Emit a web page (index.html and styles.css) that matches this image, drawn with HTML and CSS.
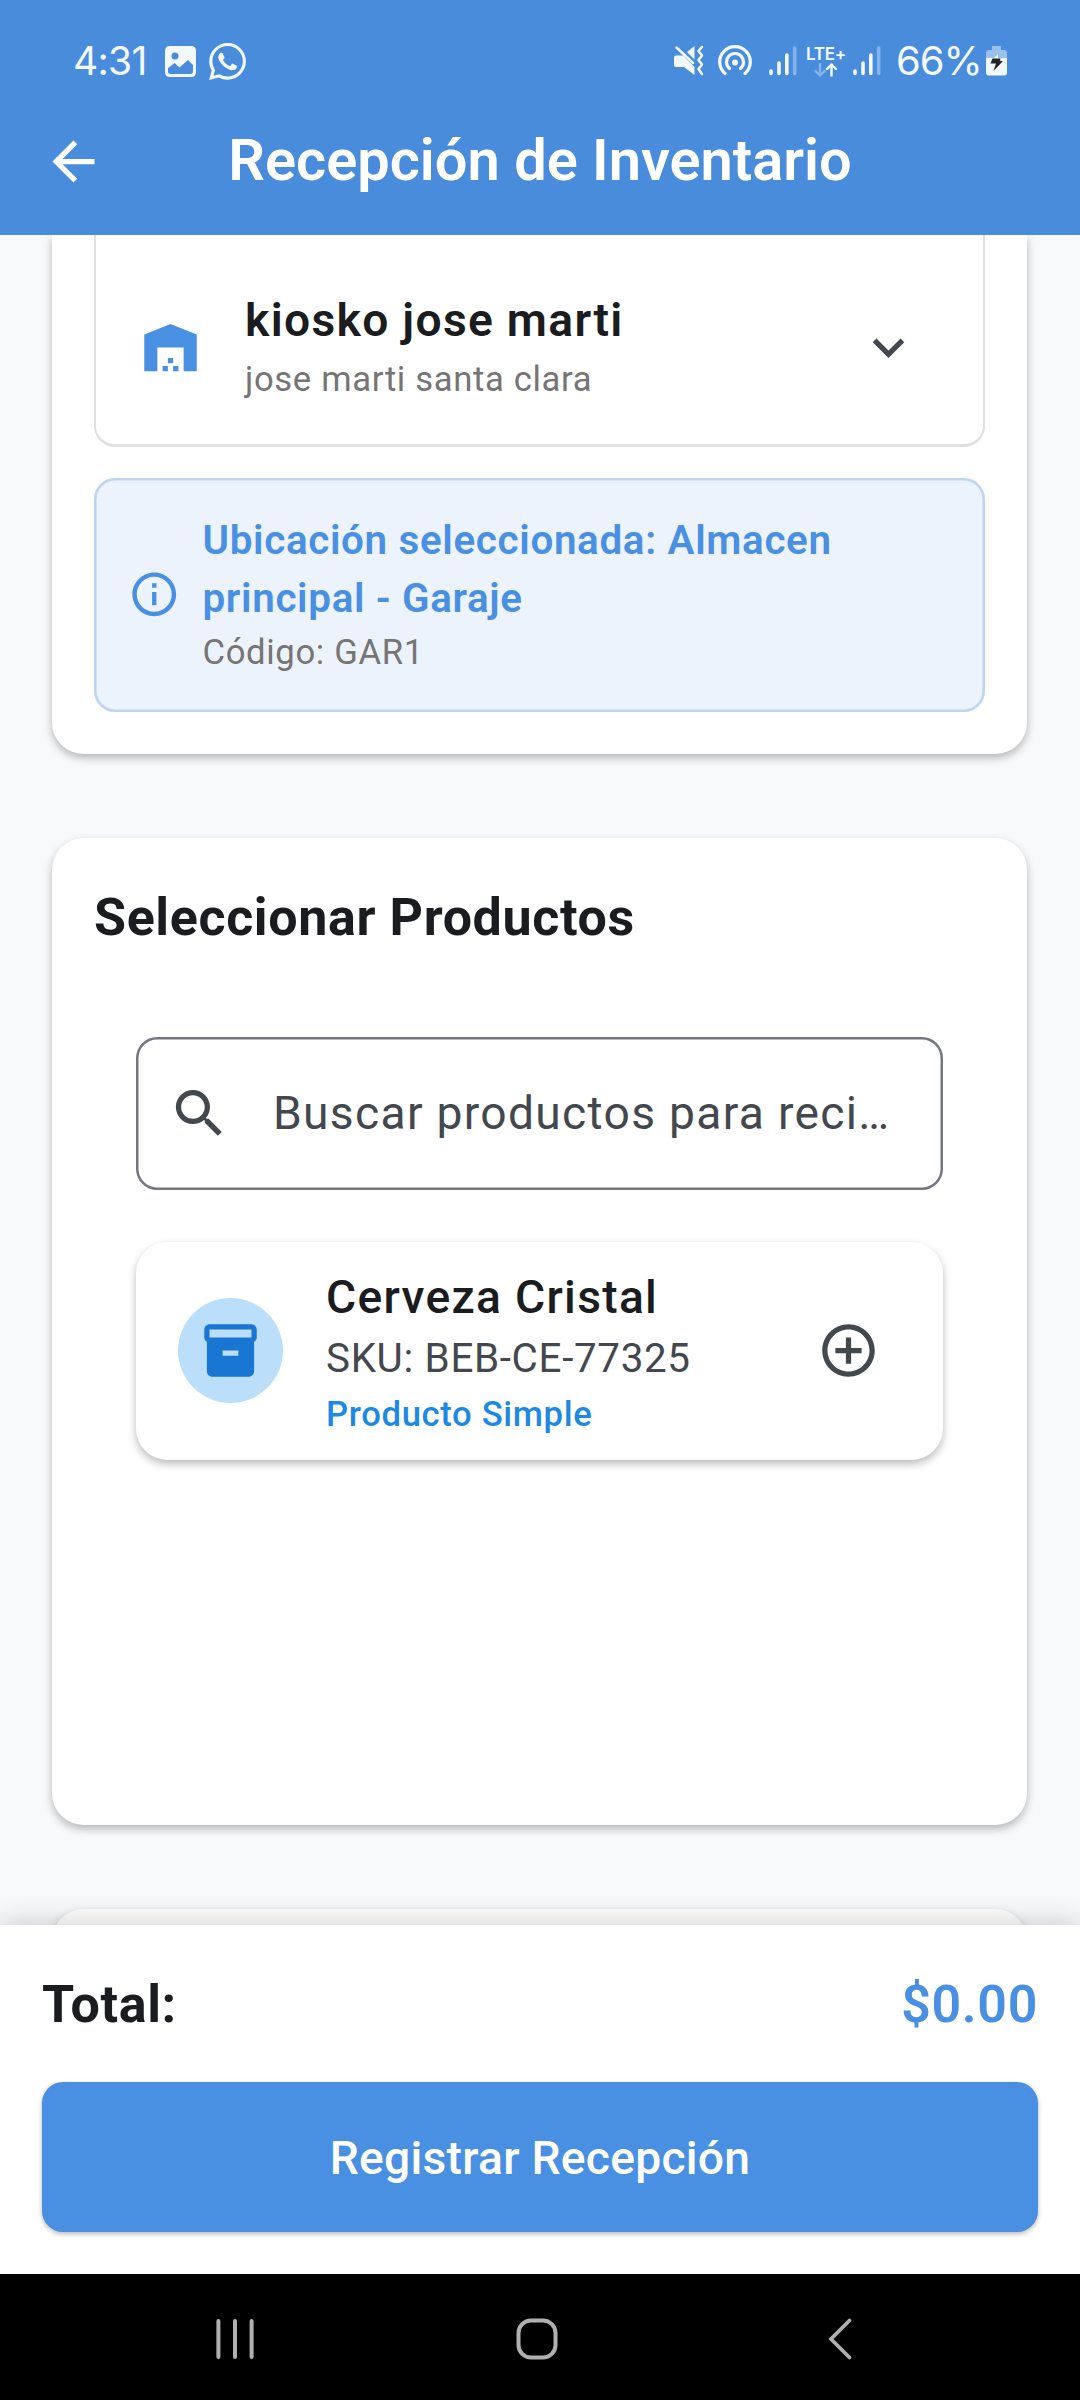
FILE: index.html
```html
<!DOCTYPE html>
<html lang="es">
<head>
<meta charset="utf-8">
<title>Recepción de Inventario</title>
<link rel="stylesheet" href="styles.css">
</head>
<body>
<header class="top">
  <div class="status">
    <span class="clock">4:31</span>
    <svg class="st-photo" width="31" height="31" viewBox="0 0 31 31"><path fill="#f2f8fe" fill-rule="evenodd" d="M5 0H26Q31 0 31 5V26Q31 31 26 31H5Q0 31 0 26V5Q0 0 5 0ZM3 22V25.500Q3 28 5.500 28H25.500Q28 28 28 25.500V19L23 14L14.500 21.500L9.500 17Z"/><circle cx="10" cy="10" r="3.500" fill="#498cdb"/></svg>
    <svg class="st-wa" width="37" height="37" viewBox="0 0 24 24" fill="#f2f8fe"><path d="M17.472 14.382c-.297-.149-1.758-.867-2.03-.967-.273-.099-.471-.148-.67.15-.197.297-.767.966-.94 1.164-.173.199-.347.223-.644.075-.297-.15-1.255-.463-2.39-1.475-.883-.788-1.48-1.761-1.653-2.059-.173-.297-.018-.458.13-.606.134-.133.298-.347.446-.52.149-.174.198-.298.298-.497.099-.198.05-.371-.025-.52-.075-.149-.669-1.612-.916-2.207-.242-.579-.487-.5-.669-.51-.173-.008-.371-.01-.57-.01-.198 0-.52.074-.792.372-.272.297-1.04 1.016-1.04 2.479 0 1.462 1.065 2.875 1.213 3.074.149.198 2.096 3.2 5.077 4.487.709.306 1.262.489 1.694.625.712.227 1.36.195 1.871.118.571-.085 1.758-.719 2.006-1.413.248-.694.248-1.289.173-1.413-.074-.124-.272-.198-.57-.347m-5.421 7.403h-.004a9.87 9.87 0 01-5.031-1.378l-.361-.214-3.741.982.998-3.648-.235-.374a9.86 9.86 0 01-1.51-5.26c.001-5.45 4.436-9.884 9.888-9.884 2.64 0 5.122 1.03 6.988 2.898a9.825 9.825 0 012.893 6.994c-.003 5.45-4.437 9.884-9.885 9.884m8.413-18.297A11.815 11.815 0 0012.05 0C5.495 0 .16 5.335.157 11.892c0 2.096.547 4.142 1.588 5.945L.057 24l6.305-1.654a11.882 11.882 0 005.683 1.448h.005c6.554 0 11.89-5.335 11.893-11.893a11.821 11.821 0 00-3.48-8.413Z"/></svg>
    <svg class="st-mute" width="31" height="32" viewBox="0 0 31 32"><path fill="#f2f8fe" d="M13 7L20.500 1V14.500ZM2 10.500H9L20.500 22V30L10 22H2Q0 22 0 20V12.500Q0 10.500 2 10.500Z"/><path fill="none" stroke="#f2f8fe" stroke-width="2.500" stroke-linecap="round" stroke-linejoin="round" d="M2.500 2.500L19 18M28 2L24.500 6L28 10.500L24.500 15L28 19.500L24.500 24L28 29"/></svg>
    <svg class="st-hot" width="34" height="32" viewBox="0 0 34 32" fill="none" stroke="#f2f8fe" stroke-width="3.200" stroke-linecap="round"><path d="M7 28.500A15.300 15.300 0 1 1 27 28.500M11.500 23.500A8.500 8.500 0 1 1 22.500 23.500"/><circle cx="17" cy="17.500" r="3" fill="#f2f8fe" stroke="none"/></svg>
    <svg class="st-sig1" width="28" height="30" viewBox="0 0 28 30" stroke="#f2f8fe" stroke-width="3.600" stroke-linecap="round"><path d="M2 25V27.500M10 17V27.500M17.800 9V27.500"/><path stroke="#86b3ea" d="M25.700 2V27.500"/></svg>
    <div class="lte"><span class="lte-label">LTE+</span><svg width="24" height="14" viewBox="0 0 24 14" fill="none" stroke-width="2.400" stroke-linecap="round" stroke-linejoin="round"><path stroke="#86b3ea" d="M6 1V12.500M1.500 8L6 12.500L10.500 8"/><path stroke="#f2f8fe" d="M17.500 12.500V1.500M13 6L17.500 1.500L22 6"/></svg></div>
    <svg class="st-sig2" width="28" height="30" viewBox="0 0 28 30" stroke="#f2f8fe" stroke-width="3.600" stroke-linecap="round"><path d="M2 25V27.500M10 17V27.500M17.800 9V27.500"/><path stroke="#86b3ea" d="M25.700 2V27.500"/></svg>
    <span class="percent">66%</span>
    <svg class="st-bat" width="21" height="30" viewBox="0 0 21 30"><path fill="#9bc0ee" d="M6 0H15V4H18Q21 4 21 7V13H0V7Q0 4 3 4H6Z"/><path fill="#f2f8fe" d="M0 12H21V26.500Q21 29.500 18 29.500H3Q0 29.500 0 26.500Z"/><path fill="#f2f8fe" d="M12 8L5 15H12Z"/><path fill="#222" d="M6.500 12.500L14.500 12.500L14 15H17L7.500 25L10 17.500H4.500Z"/></svg>
  </div>
  <div class="appbar">
    <svg class="back" viewBox="0 0 24 24" fill="#fff"><path d="M20 11H7.830l5.590-5.590L12 4l-8 8 8 8 1.410-1.410L7.830 13H20z"/></svg>
    <h1 class="title">Recepción de Inventario</h1>
  </div>
</header>

<main class="content">
  <section class="card card-location">
    <div class="picker">
      <svg class="ico" viewBox="0 0 24 24" fill="#4a90e2"><path d="M22 21V7L12 3 2 7v14h5v-9h10v9zM11 19H9v2h2zM13 16h-2v2h2zM15 19h-2v2h2z"/></svg>
      <div class="picker-text">
        <div class="picker-name">kiosko jose marti</div>
        <div class="picker-sub">jose marti santa clara</div>
      </div>
      <svg class="ico" viewBox="0 0 24 24" fill="#43474e"><path d="M7.410 8.590 12 13.170l4.590-4.580L18 10l-6 6-6-6z"/></svg>
    </div>
    <div class="info">
      <svg class="info-ico" viewBox="0 0 24 24" fill="#4a90e2"><path d="M11 7h2v2h-2zm0 4h2v6h-2zm1-9C6.480 2 2 6.480 2 12s4.480 10 10 10 10-4.480 10-10S17.520 2 12 2zm0 18c-4.410 0-8-3.590-8-8s3.590-8 8-8 8 3.590 8 8-3.590 8-8 8z"/></svg>
      <div>
        <div class="info-title">Ubicación seleccionada: Almacen<br>principal - Garaje</div>
        <div class="info-code">Código: GAR1</div>
      </div>
    </div>
  </section>

  <section class="card card-products">
    <h2 class="heading">Seleccionar Productos</h2>
    <div class="search">
      <svg class="ico" viewBox="0 0 24 24" fill="#43474e"><path d="M15.500 14h-.79l-.28-.27C15.410 12.590 16 11.110 16 9.500 16 5.910 13.090 3 9.500 3S3 5.910 3 9.500 5.910 16 9.500 16c1.610 0 3.090-.59 4.230-1.570l.27.280v.79l5 4.990L20.490 19l-4.990-5zm-6 0C7.010 14 5 11.990 5 9.500S7.010 5 9.500 5 14 7.010 14 9.500 11.990 14 9.500 14z"/></svg>
      <span class="hint">Buscar productos para reci…</span>
    </div>
    <div class="product">
      <div class="avatar"><svg class="ico" viewBox="0 0 24 24" fill="#1976d2"><path d="M20 2H4c-1 0-2 .9-2 2v3.010c0 .72.43 1.340 1 1.690V20c0 1.100 1.100 2 2 2h14c.9 0 2-.9 2-2V8.700c.57-.35 1-.97 1-1.690V4c0-1.100-1-2-2-2zm-5 12H9v-2h6v2zm5-7H4V4h16v3z"/></svg></div>
      <div class="product-text">
        <div class="product-name">Cerveza Cristal</div>
        <div class="product-sku">SKU: BEB-CE-77325</div>
        <div class="product-type">Producto Simple</div>
      </div>
      <svg class="ico" viewBox="0 0 24 24" fill="#43474e"><path d="M13 7h-2v4H7v2h4v4h2v-4h4v-2h-4zm-1-5C6.480 2 2 6.480 2 12s4.480 10 10 10 10-4.480 10-10S17.520 2 12 2zm0 18c-4.410 0-8-3.590-8-8s3.590-8 8-8 8 3.590 8 8-3.590 8-8 8z"/></svg>
    </div>
  </section>

  <section class="card card-next"></section>
</main>

<footer class="summary">
  <div class="total"><span>Total:</span><span class="amount">$0.00</span></div>
  <button class="submit">Registrar Recepción</button>
</footer>

<nav class="navbar">
  <svg width="38" height="42" viewBox="0 0 38 42" stroke="#b0b0b0" stroke-width="4" stroke-linecap="round"><path d="M2.400 3V39M19 3V39M35.600 3V39"/></svg>
  <svg class="nav-home" width="42" height="42" viewBox="0 0 42 42" fill="none" stroke="#b0b0b0" stroke-width="4"><rect x="2.500" y="2.500" width="37" height="37" rx="12.500"/></svg>
  <svg class="nav-back" width="24" height="42" viewBox="0 0 24 42" fill="none" stroke="#b0b0b0" stroke-width="3.800" stroke-linecap="round"><path d="M21.500 2.500L3 21L21.500 39.500"/></svg>
</nav>
</body>
</html>
```
FILE: styles.css
```css
* { box-sizing: border-box; }

body {
  margin: 0;
  width: 1080px;
  height: 2400px;
  display: flex;
  flex-direction: column;
  overflow: hidden;
  background: #f8f9fb;
  font-family: Roboto, "Liberation Sans", sans-serif;
  color: #1a1c20;
}

svg { display: block; flex: none; }
h1, h2 { margin: 0; }
.ico { width: 63px; height: 63px; }

.top {
  height: 235px;
  flex: none;
  position: relative;
  z-index: 2;
  background: #498cdb;
}
.status {
  height: 88px;
  padding: 34px 0 0 73px;
  display: flex;
  align-items: center;
  color: #f2f8fe;
  font-family: Inter, sans-serif;
}
.clock { width: 92px; padding-bottom: 2px; font-size: 39px; letter-spacing: -0.7px; }
.st-wa { margin-left: 13px; }
.st-mute { margin-left: 428px; }
.st-hot { margin-left: 13px; }
.st-sig1 { margin-left: 17px; }
.lte { width: 38px; margin-left: 10px; display: flex; flex-direction: column; align-items: center; }
.lte-label { font-size: 17px; line-height: 17px; font-weight: 600; letter-spacing: -0.3px; }
.st-sig2 { margin-left: 8px; }
.percent { width: 90px; margin-left: 15px; padding-bottom: 2px; font-size: 40px; letter-spacing: -1px; }

.appbar { height: 147px; padding: 0 42px; display: flex; align-items: center; }
.back { width: 63px; height: 63px; }
.title {
  flex: 1;
  margin-right: 63px;
  padding-bottom: 2px;
  text-align: center;
  font-size: 57.75px;
  font-weight: 600;
  line-height: 75px;
  color: #fff;
}

.content {
  height: 1690px;
  flex: none;
  padding: 0 53px 0 52px;
  overflow: hidden;
}
.card {
  background: #fff;
  border-radius: 31.5px;
  box-shadow: 0 4px 9px rgba(0, 0, 0, 0.27);
}
.card-location { height: 519px; padding: 0 42px; border-radius: 0 0 31.5px 31.5px; }
.picker {
  height: 212px;
  padding: 53px 63px 38px 45px;
  display: flex;
  align-items: center;
  border: 2px solid #e0e0e0;
  border-width: 0 2px 3px;
  border-radius: 0 0 21px 21px;
}
.picker .ico:first-child { margin-left: -2px; }
.picker-text { flex: 1; padding: 0 0 2px 43px; }
.picker-name { font-size: 46.2px; line-height: 66px; font-weight: 600; letter-spacing: 1.3px; }
.picker-sub { font-size: 34.65px; line-height: 52px; letter-spacing: 0.65px; color: #757575; }
.info {
  height: 234px;
  margin-top: 31px;
  padding: 0 34px 1px;
  display: flex;
  align-items: center;
  gap: 22px;
  border-radius: 21px;
  background: #ecf3fc;
  box-shadow: inset 0 0 0 2.6px #bdd5f1;
}
.info-ico { width: 52.5px; height: 52.5px; }
.info-title { font-size: 40.4px; line-height: 57.75px; font-weight: 600; letter-spacing: 0.65px; color: #4a90e2; }
.info-code { font-size: 34.65px; line-height: 49.5px; letter-spacing: 0.65px; color: #757575; }

.card-products { height: 987px; margin-top: 83.5px; padding: 43px 42px 0; }
.heading { font-size: 52px; line-height: 74px; font-weight: 700; letter-spacing: 0.62px; }
.search {
  height: 153px;
  margin: 82.5px 42px 0;
  padding: 0 32px;
  display: flex;
  align-items: center;
  gap: 42px;
  border-radius: 21px;
  box-shadow: inset 0 0 0 2.5px #74777f;
}
.hint { padding-bottom: 2px; font-size: 46.2px; line-height: 66px; letter-spacing: 1.3px; color: #43474e; white-space: nowrap; }
.product {
  height: 218px;
  margin: 52px 42px 0;
  padding: 0 63px 1px 42px;
  display: flex;
  align-items: center;
  border-radius: 31.5px;
  background: #fff;
  box-shadow: 0 4px 9px rgba(0, 0, 0, 0.27);
}
.avatar {
  width: 105px;
  height: 105px;
  display: flex;
  align-items: center;
  justify-content: center;
  border-radius: 50%;
  background: #bbdefb;
}
.product-text { flex: 1; padding: 2px 0 0 43px; }
.product-name { font-size: 46.2px; line-height: 66px; font-weight: 500; letter-spacing: 1.3px; }
.product-sku { font-size: 40.4px; line-height: 58px; letter-spacing: 0.65px; color: #43474e; }
.product-type { font-size: 34.65px; line-height: 52px; font-weight: 500; letter-spacing: 0.65px; color: #1e88e5; }

.card-next { height: 300px; margin-top: 84px; }

.summary {
  height: 349px;
  flex: none;
  position: relative;
  padding: 42px;
  background: #fff;
  box-shadow: 0 -3px 26px rgba(0, 0, 0, 0.18);
}
.total {
  display: flex;
  justify-content: space-between;
  font-size: 52px;
  line-height: 75px;
  font-weight: 700;
  letter-spacing: 0.65px;
}
.amount { font-weight: 600; color: #4a90e2; }
.submit {
  display: block;
  width: 996px;
  height: 150px;
  margin-top: 40px;
  padding: 1px 0 0;
  border: 0;
  border-radius: 21px;
  background: #4a90e2;
  box-shadow: 0 2px 5px rgba(0, 0, 0, 0.28);
  color: #fff;
  font: 500 46.2px/66px Roboto, sans-serif;
  letter-spacing: 0.26px;
}

.navbar {
  height: 126px;
  flex: none;
  padding: 4px 0 0 216px;
  display: flex;
  align-items: center;
  position: relative;
  background: #000;
}
.nav-home { margin-left: 262px; }
.nav-back { margin-left: 270px; }
```
